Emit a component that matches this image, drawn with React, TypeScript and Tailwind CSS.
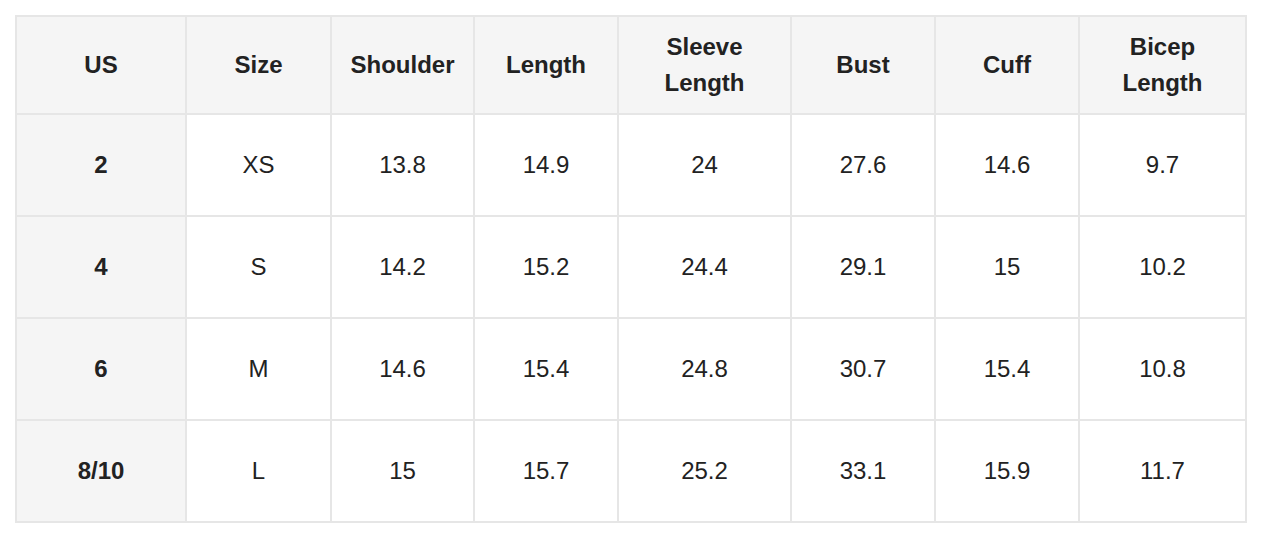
import React from "react";

const headers: React.ReactNode[] = [
  "US",
  "Size",
  "Shoulder",
  "Length",
  <>Sleeve<br />Length</>,
  "Bust",
  "Cuff",
  <>Bicep<br />Length</>,
];

const rows: string[][] = [
  ["2", "XS", "13.8", "14.9", "24", "27.6", "14.6", "9.7"],
  ["4", "S", "14.2", "15.2", "24.4", "29.1", "15", "10.2"],
  ["6", "M", "14.6", "15.4", "24.8", "30.7", "15.4", "10.8"],
  ["8/10", "L", "15", "15.7", "25.2", "33.1", "15.9", "11.7"],
];

export default function App() {
  return (
    <div className="w-[1265px] h-[542px] bg-white pt-[15px] pl-[15px]" style={{ fontFamily: '"Liberation Sans", Arial, sans-serif' }}>
      <div className="grid w-[1232px] grid-cols-[168px_143px_141px_142px_171px_142px_142px_165px] grid-rows-[96px_100px_100px_100px_100px] gap-[2px] border-2 border-[#e6e6e6] bg-[#e6e6e6] text-[#222222] text-[24px]">
        {headers.map((h, i) => (
          <div key={"h" + i} className="flex items-center justify-center bg-[#f5f5f5] text-center font-bold leading-[36px]">
            <span>{h}</span>
          </div>
        ))}
        {rows.map((r, ri) =>
          r.map((c, ci) => (
            <div
              key={ri + "-" + ci}
              className={
                ci === 0
                  ? "flex items-center justify-center bg-[#f5f5f5] font-bold"
                  : "flex items-center justify-center bg-white"
              }
            >
              {c}
            </div>
          ))
        )}
      </div>
    </div>
  );
}
